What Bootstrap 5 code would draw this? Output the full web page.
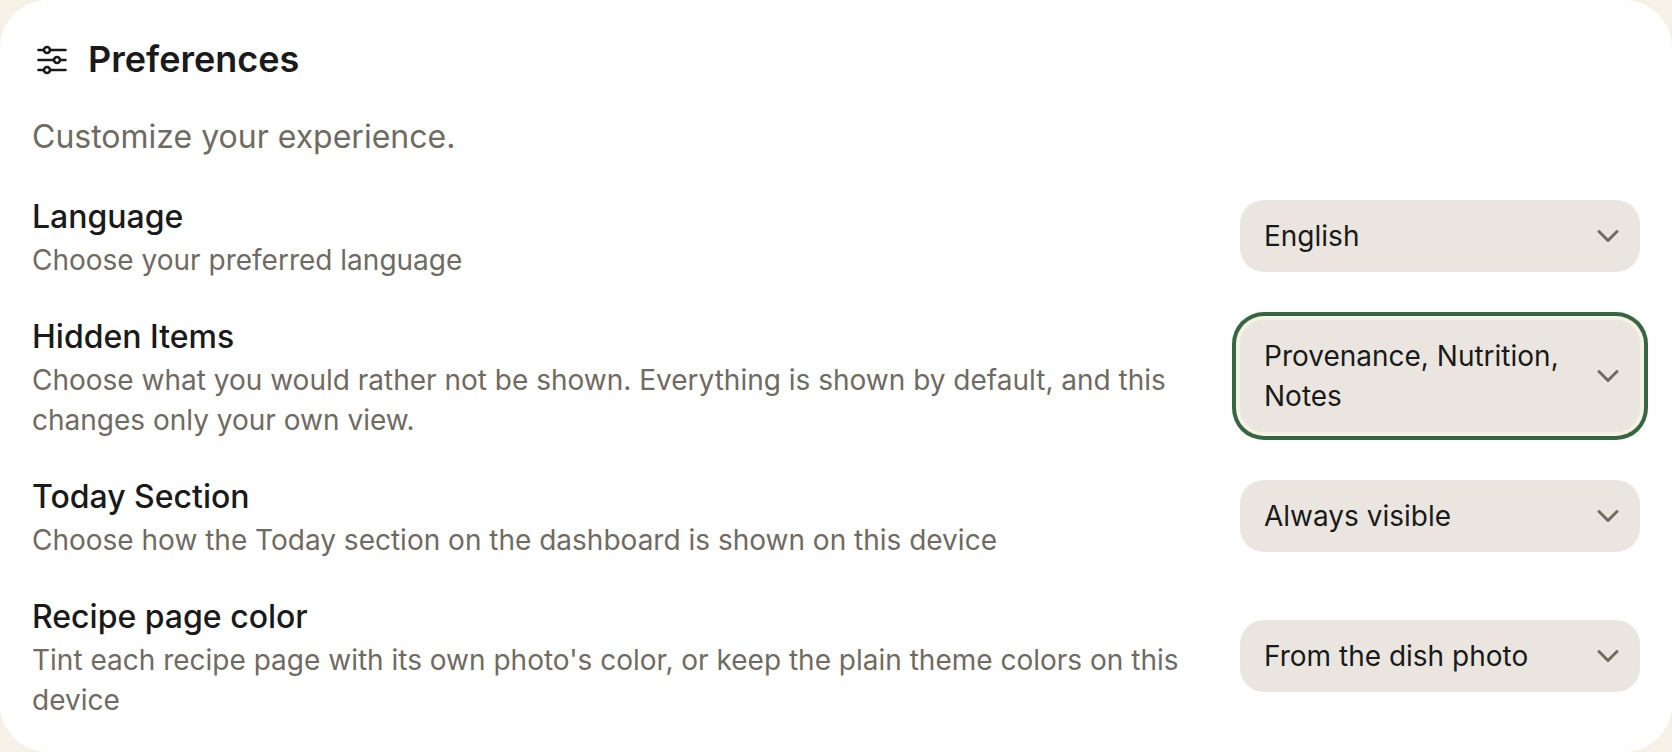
<!DOCTYPE html>
<html lang="en">
<head>
<meta charset="utf-8">
<title>Preferences</title>
<link href="https://cdn.jsdelivr.net/npm/bootstrap@5.3.0/dist/css/bootstrap.min.css" rel="stylesheet">
<style>
html, body { height: 100%; }
body { background: #f5f1e6; font-family: Inter, "Liberation Sans", sans-serif; color: #1a1a1a; overflow: hidden; }
.pref-card { background: #fff; border: 0; border-radius: 48px; height: 752px; padding: 32px; }
.pref-head { height: 56px; }
.pref-title { font-size: 36px; font-weight: 600; line-height: 54px; padding-bottom: 2px; color: #1a1a1a; margin: 0; }
.pref-icon { width: 40px; height: 40px; flex: none; margin-right: 16px; }
.pref-intro { font-size: 32px; line-height: 48px; color: #6f6a62; margin: 25px 0 31px; }
.pref-rows { gap: 32px; }
.pref-label { font-size: 32px; font-weight: 500; line-height: 46px; padding-top: 2px; color: #1a1a1a; }
.pref-desc { font-size: 28px; line-height: 40px; color: #6f6a62; }
.pref-info { width: 1176px; }
.pref-select { width: 400px; min-height: 72px; flex: none; background: #eae6df; border: 0; border-radius: 24px; padding: 16px 14px 16px 24px; font-size: 28px; line-height: 40px; color: #1a1a1a; text-align: left; gap: 14px; }
.pref-select:focus, .pref-select:hover, .pref-select:active { background: #eae6df !important; color: #1a1a1a !important; }
.pref-select svg { width: 36px; height: 36px; flex: none; color: #6f6a62; }
.pref-ring { box-shadow: 0 0 0 4px #f5f1e6, 0 0 0 8px #36663f; }
</style>
</head>
<body>
<main class="card pref-card">
  <header class="d-flex align-items-center pref-head">
    <svg class="pref-icon" viewBox="0 0 40 40" fill="none" stroke="#1a1a1a" stroke-width="2.6" stroke-linecap="round" aria-hidden="true">
      <path d="M6.5 10h27M6.5 20h27M6.5 30h27"/>
      <circle cx="15" cy="10" r="3" fill="#fff"/>
      <circle cx="25" cy="20" r="3" fill="#fff"/>
      <circle cx="15" cy="30" r="3" fill="#fff"/>
    </svg>
    <h1 class="pref-title">Preferences</h1>
  </header>
  <p class="pref-intro">Customize your experience.</p>
  <div class="d-flex flex-column pref-rows">
    <div class="d-flex justify-content-between align-items-center">
      <div class="pref-info">
        <div class="pref-label">Language</div>
        <div class="pref-desc">Choose your preferred language</div>
      </div>
      <button type="button" class="btn d-flex align-items-center justify-content-between pref-select"><span>English</span><svg viewBox="0 0 24 24" fill="none" stroke="currentColor" stroke-width="2" stroke-linecap="round" stroke-linejoin="round" aria-hidden="true"><path d="m6 9 6 6 6-6"/></svg></button>
    </div>
    <div class="d-flex justify-content-between align-items-center">
      <div class="pref-info">
        <div class="pref-label">Hidden Items</div>
        <div class="pref-desc">Choose what you would rather not be shown. Everything is shown by default, and this changes only your own view.</div>
      </div>
      <button type="button" class="btn d-flex align-items-center justify-content-between pref-select pref-ring"><span>Provenance, Nutrition, Notes</span><svg viewBox="0 0 24 24" fill="none" stroke="currentColor" stroke-width="2" stroke-linecap="round" stroke-linejoin="round" aria-hidden="true"><path d="m6 9 6 6 6-6"/></svg></button>
    </div>
    <div class="d-flex justify-content-between align-items-center">
      <div class="pref-info">
        <div class="pref-label">Today Section</div>
        <div class="pref-desc">Choose how the Today section on the dashboard is shown on this device</div>
      </div>
      <button type="button" class="btn d-flex align-items-center justify-content-between pref-select"><span>Always visible</span><svg viewBox="0 0 24 24" fill="none" stroke="currentColor" stroke-width="2" stroke-linecap="round" stroke-linejoin="round" aria-hidden="true"><path d="m6 9 6 6 6-6"/></svg></button>
    </div>
    <div class="d-flex justify-content-between align-items-center">
      <div class="pref-info">
        <div class="pref-label">Recipe page color</div>
        <div class="pref-desc">Tint each recipe page with its own photo's color, or keep the plain theme colors on this device</div>
      </div>
      <button type="button" class="btn d-flex align-items-center justify-content-between pref-select"><span>From the dish photo</span><svg viewBox="0 0 24 24" fill="none" stroke="currentColor" stroke-width="2" stroke-linecap="round" stroke-linejoin="round" aria-hidden="true"><path d="m6 9 6 6 6-6"/></svg></button>
    </div>
  </div>
</main>
<script src="https://cdn.jsdelivr.net/npm/bootstrap@5.3.0/dist/js/bootstrap.bundle.min.js"></script>
</body>
</html>
